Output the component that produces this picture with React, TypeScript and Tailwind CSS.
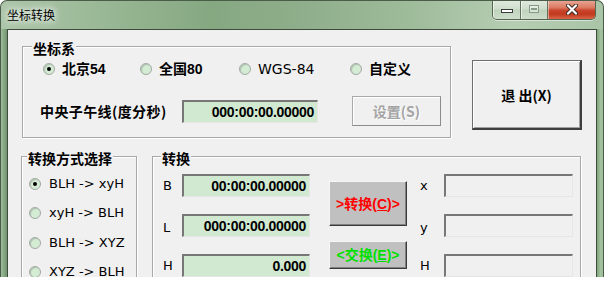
import React from "react";

const Radio = ({ checked }: { checked?: boolean }) => (
  <span className="flex h-[12px] w-[12px] shrink-0 items-center justify-center rounded-full border border-[#a3aaa3] bg-[#d4ebd4] shadow-[inset_1px_1px_1px_rgba(0,0,0,0.18)]">
    {checked && <span className="h-[4px] w-[4px] rounded-full bg-black" />}
  </span>
);

const Field = ({ value, green, w }: { value?: string; green?: boolean; w: string }) => (
  <div
    className={`flex h-[23px] shrink-0 items-center justify-end border-t-2 border-l-2 border-r border-b border-t-[#777] border-l-[#777] border-r-[#e6e6e6] border-b-[#e6e6e6] pr-[3px] font-['Liberation_Sans',sans-serif] text-[14px] font-bold leading-[18px] tracking-[-0.3px] text-black ${w} ${green ? "bg-[#d1e9d1]" : "bg-[#f0f0f0]"}`}
  >
    {value}
  </div>
);

const GroupLabel = ({ children, left }: { children: React.ReactNode; left: string }) => (
  <span
    className={`absolute top-[-8px] bg-[#f0f0f0] px-[1px] font-['Noto_Sans_CJK_SC',sans-serif] text-[14px] font-bold leading-[18px] text-black ${left}`}
  >
    {children}
  </span>
);

const CoordRadio = ({ label, checked, w, bold }: { label: string; checked?: boolean; w: string; bold?: boolean }) => (
  <div className={`flex h-[16px] items-center whitespace-nowrap ${w}`}>
    <Radio checked={checked} />
    <span
      className={`ml-[7px] text-[14px] leading-[16px] text-black ${
        bold
          ? "font-['Liberation_Sans','Noto_Sans_CJK_SC',sans-serif] font-bold"
          : "font-['DejaVu_Sans',sans-serif] text-[13px]"
      }`}
    >
      {label}
    </span>
  </div>
);

const ModeRadio = ({ label, checked }: { label: string; checked?: boolean }) => (
  <div className="flex h-[29.5px] items-center">
    <Radio checked={checked} />
    <span className="ml-[8px] font-['DejaVu_Sans',sans-serif] text-[13px] leading-[16px] text-black">{label}</span>
  </div>
);

const SmallLabel = ({ children, w }: { children: React.ReactNode; w: string }) => (
  <span className={`font-['DejaVu_Sans',sans-serif] text-[13px] leading-[16px] text-black ${w}`}>{children}</span>
);

export default function App() {
  return (
    <div className="h-[288px] w-[604px] overflow-hidden bg-white">
      <div className="flex h-[277px] flex-col overflow-hidden rounded-t-[7px] border border-b-0 border-[#4b5c49] bg-[linear-gradient(90deg,#adc6aa_0%,#98b794_18%,#85a881_35%,#8fae8b_50%,#9ebb9a_68%,#b6cdb3_85%,#a9c4a6_100%)]">
        {/* title bar */}
        <div className="flex h-[28px] shrink-0 items-start">
          <span className="pl-[6px] pt-[6px] font-['Noto_Sans_CJK_SC',sans-serif] text-[12px] leading-[16px] text-black [text-shadow:0_0_6px_#fff,0_0_10px_#fff]">
            坐标转换
          </span>
          <div className="-mt-[1px] mr-[7px] ml-auto flex h-[20px] overflow-hidden rounded-b-[5px] border border-t-0 border-[#55654f] shadow-[0_1px_0_rgba(255,255,255,0.5)]">
            <div className="flex w-[28px] justify-center border-r border-[#62725f] bg-[linear-gradient(180deg,rgba(255,255,255,0.6)_0%,rgba(255,255,255,0.35)_48%,rgba(255,255,255,0.15)_52%,rgba(255,255,255,0.35)_100%)] shadow-[inset_1px_1px_0_rgba(255,255,255,0.6)]">
              <span className="mt-[9px] h-[4px] w-[12px] border border-[#3a3a3a] bg-white" />
            </div>
            <div className="flex w-[27px] justify-center border-r border-[#62725f] bg-[linear-gradient(180deg,rgba(255,255,255,0.6)_0%,rgba(255,255,255,0.35)_48%,rgba(255,255,255,0.15)_52%,rgba(255,255,255,0.35)_100%)] shadow-[inset_1px_1px_0_rgba(255,255,255,0.6)]">
              <span className="mt-[5px] flex h-[8px] w-[10px] items-center justify-center border border-[#8a9a88] bg-[rgba(255,255,255,0.4)]">
                <span className="h-[2px] w-[6px] border border-[#8a9a88]" />
              </span>
            </div>
            <div className="flex w-[47px] justify-center bg-[linear-gradient(180deg,#e9aa9a_0%,#dc7a63_40%,#c9442a_55%,#c2391f_75%,#d8664a_100%)] shadow-[inset_1px_1px_0_rgba(255,255,255,0.45)]">
              <svg width="12" height="11" viewBox="0 0 12 11" className="mt-[4px]">
                <path d="M2 1.5 L10 9.5 M10 1.5 L2 9.5" stroke="#3a2a25" strokeWidth="4" strokeLinecap="round" />
                <path d="M2 1.5 L10 9.5 M10 1.5 L2 9.5" stroke="#ffffff" strokeWidth="2.2" strokeLinecap="round" />
              </svg>
            </div>
          </div>
        </div>

        {/* body */}
        <div className="flex min-h-0 flex-1">
          <div className="w-[6px] bg-[linear-gradient(90deg,#9fbb9c,#86a882_50%,#6f9270)]" />
          <div className="w-[590px] overflow-hidden border border-b-0 border-[#3e4c3c] bg-[#f0f0f0]">
            {/* row 1 */}
            <div className="flex pl-[14px] pt-[16px]">
              <div className="relative h-[92px] w-[429px] border border-[#a8a8a8] shadow-[inset_1px_1px_0_#fff,1px_1px_0_#fff]">
                <GroupLabel left="left-[9px]">坐标系</GroupLabel>
                <div className="flex pl-[20px] pt-[14px]">
                  <CoordRadio label="北京54" checked bold w="w-[97px]" />
                  <CoordRadio label="全国80" bold w="w-[99px]" />
                  <CoordRadio label="WGS-84" w="w-[111px]" />
                  <CoordRadio label="自定义" bold w="w-[80px]" />
                </div>
                <div className="mt-[19px] flex items-center pl-[17px]">
                  <span className="w-[142px] font-['Noto_Sans_CJK_SC',sans-serif] text-[14px] font-bold leading-[18px] tracking-[0.4px] text-black">
                    中央子午线(度分秒)
                  </span>
                  <Field value="000:00:00.00000" green w="w-[136px]" />
                  <button className="ml-[34px] flex h-[30px] w-[89px] items-center justify-center border border-[#a9a9a9] border-r-[#8c8c8c] border-b-[#8c8c8c] bg-[#f0f0f0] font-['Noto_Sans_CJK_SC',sans-serif] text-[14px] font-bold leading-[18px] text-[#a3a3a3] shadow-[inset_1px_1px_0_#fff] [text-shadow:1px_1px_0_#fff]">
                    设置(S)
                  </button>
                </div>
              </div>
              <button className="mt-[14px] ml-[21px] flex h-[70px] w-[110px] items-center justify-center border border-[#6d6d6d] border-r-2 border-b-2 border-r-[#3f3f3f] border-b-[#3f3f3f] bg-[#f0f0f0] font-['Noto_Sans_CJK_SC',sans-serif] text-[14px] font-bold leading-[18px] text-black shadow-[inset_1px_1px_0_#fff,inset_-1px_-1px_0_#a0a0a0]">
                退 出(X)
              </button>
            </div>

            {/* row 2 */}
            <div className="mt-[18px] flex pl-[13px]">
              <div className="relative h-[140px] w-[116px] border border-[#a8a8a8] shadow-[inset_1px_1px_0_#fff,1px_1px_0_#fff]">
                <GroupLabel left="left-[5px]">转换方式选择</GroupLabel>
                <div className="flex flex-col pl-[7px] pt-[12px]">
                  <ModeRadio label="BLH -> xyH" checked />
                  <ModeRadio label="xyH -> BLH" />
                  <ModeRadio label="BLH -> XYZ" />
                  <ModeRadio label="XYZ -> BLH" />
                </div>
              </div>
              <div className="relative ml-[15px] h-[140px] w-[429px] border border-[#a8a8a8] shadow-[inset_1px_1px_0_#fff,1px_1px_0_#fff]">
                <GroupLabel left="left-[8px]">转换</GroupLabel>
                <div className="flex items-start pl-[10px] pt-[17px]">
                  <div className="flex flex-col gap-[17px]">
                    <div className="flex items-center">
                      <SmallLabel w="w-[19px]">B</SmallLabel>
                      <Field value="00:00:00.00000" green w="w-[128px]" />
                    </div>
                    <div className="flex items-center">
                      <SmallLabel w="w-[19px] pt-[5px]">L</SmallLabel>
                      <Field value="000:00:00.00000" green w="w-[128px]" />
                    </div>
                    <div className="flex items-center">
                      <SmallLabel w="w-[19px]">H</SmallLabel>
                      <Field value="0.000" green w="w-[128px]" />
                    </div>
                  </div>
                  <div className="ml-[19px] flex flex-col">
                    <button className="mt-[7px] flex h-[45px] w-[78px] items-center justify-center border border-t-[#f6f6f6] border-l-[#f6f6f6] border-r-[#3a3a3a] border-b-[#3a3a3a] bg-[#c0c0c0] font-['Liberation_Sans','Noto_Sans_CJK_SC',sans-serif] text-[14px] font-bold leading-[18px] text-[#ff0000] shadow-[inset_-1px_-1px_0_#808080]">
                      &gt;转换(<span className="underline">C</span>)&gt;
                    </button>
                    <button className="mt-[15px] flex h-[28px] w-[78px] items-center justify-center border border-t-[#f6f6f6] border-l-[#f6f6f6] border-r-[#3a3a3a] border-b-[#3a3a3a] bg-[#c0c0c0] font-['Liberation_Sans','Noto_Sans_CJK_SC',sans-serif] text-[14px] font-bold leading-[18px] text-[#00e000] shadow-[inset_-1px_-1px_0_#808080]">
                      &lt;交换(<span className="underline">E</span>)&gt;
                    </button>
                  </div>
                  <div className="ml-[13px] flex flex-col gap-[17px]">
                    <div className="flex items-center">
                      <SmallLabel w="w-[24px]">x</SmallLabel>
                      <Field w="w-[129px]" />
                    </div>
                    <div className="flex items-center">
                      <SmallLabel w="w-[24px] pt-[5px]">y</SmallLabel>
                      <Field w="w-[129px]" />
                    </div>
                    <div className="flex items-center">
                      <SmallLabel w="w-[24px]">H</SmallLabel>
                      <Field w="w-[129px]" />
                    </div>
                  </div>
                </div>
              </div>
            </div>
          </div>
          <div className="w-[6px] bg-[linear-gradient(90deg,#7ea57a,#a3c2a0_60%,#9dbb99)]" />
        </div>
      </div>
    </div>
  );
}
